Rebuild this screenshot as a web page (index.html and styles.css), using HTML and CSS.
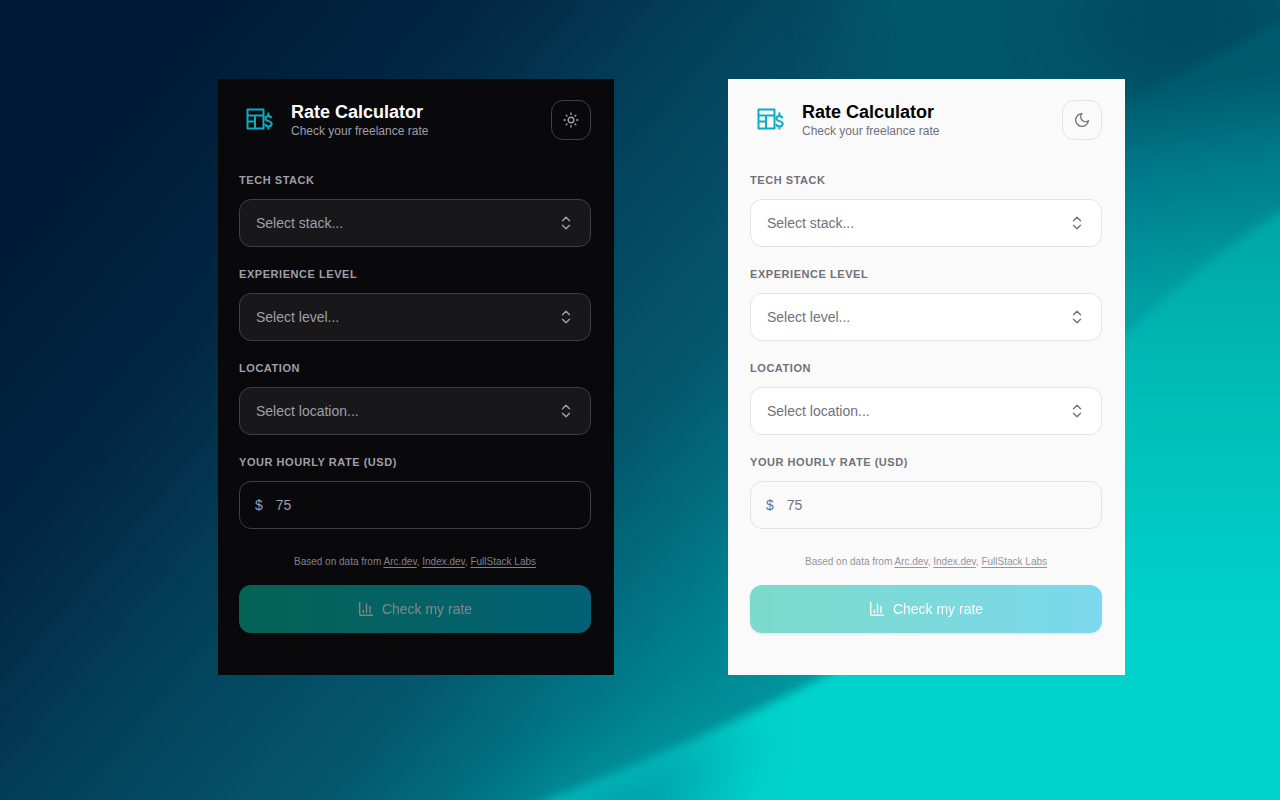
FILE: index.html
```html
<!DOCTYPE html>
<html lang="en">
<head>
  <meta charset="utf-8">
  <title>Rate Calculator</title>
  <link rel="stylesheet" href="styles.css">
</head>
<body>

<svg class="icon-defs" aria-hidden="true">
  <symbol id="logo" viewBox="0 0 40 40">
    <path d="M8.500 9.500H24.500V28.500H8.500zM8.500 15.500H24.500M8.500 21.500H16M16 15.500v13" />
    <path d="M32.500 18.200c-.4-1.500-1.600-2.300-3.100-2.300-1.700 0-3 .9-3 2.600 0 3.300 6.300 2 6.300 5.200 0 1.700-1.400 2.700-3.200 2.700-1.700 0-3-.9-3.300-2.400M29.400 12.500v3M29.400 26.500v3" />
  </symbol>
  <symbol id="sun" viewBox="0 0 16 16">
    <circle cx="8" cy="8" r="2.8" />
    <path d="M8 1v1.400M8 13.600v1.400M1 8h1.400M13.600 8h1.400M3.200 3.200l.8.8M12 12l.8.8M3.200 12.800l.8-.8M12 4l.8-.8" />
  </symbol>
  <symbol id="moon" viewBox="0 0 16 16">
    <path d="M8 1.600A4.800 4.800 0 0 0 14.400 8.700 6.400 6.400 0 1 1 8 1.600z" />
  </symbol>
  <symbol id="chart" viewBox="0 0 16 16">
    <path d="M1.700 1.500v11.500q0 1.300 1.300 1.300h11.500M5.300 9.500v2M8.500 3v8.500M12 5.500v6" />
  </symbol>
</svg>

<div class="page">
  <svg class="backdrop" viewBox="0 0 1280 800" preserveAspectRatio="none" aria-hidden="true">
    <defs>
      <linearGradient id="base" gradientUnits="userSpaceOnUse" x1="0" y1="0" x2="813" y2="691">
        <stop offset=".15" stop-color="#001a36" />
        <stop offset=".34" stop-color="#022642" />
        <stop offset=".5" stop-color="#033e58" />
        <stop offset=".72" stop-color="#04586e" />
        <stop offset=".88" stop-color="#007f8e" />
        <stop offset="1" stop-color="#0099a0" />
      </linearGradient>
      <linearGradient id="side" gradientUnits="userSpaceOnUse" x1="1130" y1="95" x2="1160" y2="300">
        <stop offset="0" stop-color="#045a6e" />
        <stop offset=".35" stop-color="#007788" />
        <stop offset="1" stop-color="#00a0a3" />
      </linearGradient>
      <linearGradient id="bright" gradientUnits="userSpaceOnUse" x1="1200" y1="220" x2="1200" y2="640">
        <stop offset="0" stop-color="#00a6a8" />
        <stop offset=".5" stop-color="#00c0ba" />
        <stop offset="1" stop-color="#00d3cc" />
      </linearGradient>
      <filter id="soft" x="-20%" y="-20%" width="140%" height="140%"><feGaussianBlur stdDeviation="5" /></filter>
      <filter id="softer" x="-100%" y="-100%" width="300%" height="300%"><feGaussianBlur stdDeviation="35" /></filter>
    </defs>
    <rect width="1280" height="800" fill="url(#base)" />
    <path d="M840-100H1400V170H880z" fill="#04566a" filter="url(#softer)" />
    <ellipse cx="1180" cy="20" rx="110" ry="60" fill="#04465e" opacity=".8" filter="url(#softer)" />
    <path d="M1300 10Q1220 60 1100 112V900H1300z" fill="url(#side)" filter="url(#soft)" />
    <path d="M1300 200Q1200 260 1110 350V560L840 668Q700 742 540 803V860H1340V200z" fill="url(#bright)" filter="url(#soft)" />
    <path d="M480 880L540 800 740 710 720 770 640 880z" fill="#0096a0" opacity=".9" filter="url(#softer)" />
  </svg>

  <main class="panels">
    <form class="panel dark">
      <header class="header">
        <svg class="logo"><use href="#logo" /></svg>
        <div class="heading">
          <h1 class="title">Rate Calculator</h1>
          <p class="subtitle">Check your freelance rate</p>
        </div>
        <button class="theme-button" type="button" aria-label="Light theme"><svg class="icon"><use href="#sun" /></svg></button>
      </header>

      <div class="fields">
        <div class="field">
          <label class="label" for="stack-dark">TECH STACK</label>
          <select class="control select" id="stack-dark"><option>Select stack...</option></select>
        </div>
        <div class="field">
          <label class="label" for="level-dark">EXPERIENCE LEVEL</label>
          <select class="control select" id="level-dark"><option>Select level...</option></select>
        </div>
        <div class="field">
          <label class="label" for="location-dark">LOCATION</label>
          <select class="control select" id="location-dark"><option>Select location...</option></select>
        </div>
        <div class="field">
          <label class="label" for="rate-dark">YOUR HOURLY RATE (USD)</label>
          <div class="control money">
            <span class="currency">$</span>
            <input class="amount" type="text" id="rate-dark" placeholder="75">
          </div>
        </div>
      </div>

      <p class="sources">Based on data from <a href="#">Arc.dev</a>, <a href="#">Index.dev</a>, <a href="#">FullStack Labs</a></p>
      <button class="submit" type="submit" disabled><svg class="icon"><use href="#chart" /></svg>Check my rate</button>
    </form>

    <form class="panel light">
      <header class="header">
        <svg class="logo"><use href="#logo" /></svg>
        <div class="heading">
          <h1 class="title">Rate Calculator</h1>
          <p class="subtitle">Check your freelance rate</p>
        </div>
        <button class="theme-button" type="button" aria-label="Dark theme"><svg class="icon"><use href="#moon" /></svg></button>
      </header>

      <div class="fields">
        <div class="field">
          <label class="label" for="stack-light">TECH STACK</label>
          <select class="control select" id="stack-light"><option>Select stack...</option></select>
        </div>
        <div class="field">
          <label class="label" for="level-light">EXPERIENCE LEVEL</label>
          <select class="control select" id="level-light"><option>Select level...</option></select>
        </div>
        <div class="field">
          <label class="label" for="location-light">LOCATION</label>
          <select class="control select" id="location-light"><option>Select location...</option></select>
        </div>
        <div class="field">
          <label class="label" for="rate-light">YOUR HOURLY RATE (USD)</label>
          <div class="control money">
            <span class="currency">$</span>
            <input class="amount" type="text" id="rate-light" placeholder="75">
          </div>
        </div>
      </div>

      <p class="sources">Based on data from <a href="#">Arc.dev</a>, <a href="#">Index.dev</a>, <a href="#">FullStack Labs</a></p>
      <button class="submit" type="submit" disabled><svg class="icon"><use href="#chart" /></svg>Check my rate</button>
    </form>
  </main>
</div>

</body>
</html>
```
FILE: styles.css
```css
* {
  box-sizing: border-box;
}
body {
  margin: 0;
  font-family: "Liberation Sans", Arial, sans-serif;
}
.icon-defs {
  display: none;
}
.page {
  display: grid;
  min-height: 100vh;
  background-color: #04566c;
}
.backdrop {
  grid-area: 1 / 1;
  width: 100%;
  height: 100%;
  min-height: 100vh;
}
.panels {
  grid-area: 1 / 1;
  z-index: 1;
  display: grid;
  grid-template-columns: 396fr 397fr;
  gap: 114px;
  align-items: start;
  padding: 79px 155px 79px 218px;
}
.panel {
  display: flex;
  flex-direction: column;
  background-color: var(--bg);
  color: var(--text);
}
.dark {
  --bg: #09090b;
  --text: #ffffff;
  --muted: #9f9fa9;
  --faint: #80808a;
  --border: #3f3f46;
  --box: #18181b;
  --currency: #90a1b9;
  --arrows: url("data:image/svg+xml,%3Csvg xmlns='http://www.w3.org/2000/svg' viewBox='0 0 16 16' fill='none' stroke='%239f9fa9' stroke-width='1.4' stroke-linecap='round' stroke-linejoin='round'%3E%3Cpath d='M4.5 5.8L8 2.3l3.5 3.5M4.5 10.2L8 13.7l3.5-3.5'/%3E%3C/svg%3E");
  padding: 21px 23px 42px 21px;
}
.light {
  --bg: #fafafa;
  --text: #000000;
  --muted: #71717b;
  --faint: #94949e;
  --border: #e4e4e7;
  --box: #ffffff;
  --currency: #62748e;
  --arrows: url("data:image/svg+xml,%3Csvg xmlns='http://www.w3.org/2000/svg' viewBox='0 0 16 16' fill='none' stroke='%2371717b' stroke-width='1.4' stroke-linecap='round' stroke-linejoin='round'%3E%3Cpath d='M4.5 5.8L8 2.3l3.5 3.5M4.5 10.2L8 13.7l3.5-3.5'/%3E%3C/svg%3E");
  padding: 21px 23px 42px 22px;
}
.header {
  display: flex;
  align-items: center;
  height: 40px;
}
.logo {
  width: 40px;
  height: 40px;
  fill: none;
  stroke: #06b0c2;
  stroke-width: 2;
  stroke-linejoin: round;
}
.heading {
  flex: 1;
  margin-left: 12px;
}
.title {
  margin: 0;
  font-size: 18px;
  line-height: 22px;
}
.subtitle {
  margin: 0;
  font-size: 12px;
  line-height: 16px;
  color: var(--muted);
}
.icon {
  width: 16px;
  height: 16px;
  fill: none;
  stroke: currentColor;
  stroke-width: 1.4;
  stroke-linecap: round;
  stroke-linejoin: round;
}
.theme-button {
  display: flex;
  align-items: center;
  justify-content: center;
  width: 40px;
  height: 40px;
  padding: 0;
  border: 1px solid var(--border);
  border-radius: 12px;
  background: none;
  color: var(--muted);
}
.fields {
  display: flex;
  flex-direction: column;
  gap: 19px;
  margin-top: 32px;
}
.field {
  display: flex;
  flex-direction: column;
  gap: 11px;
}
.label {
  font-size: 11px;
  font-weight: bold;
  line-height: 16px;
  letter-spacing: 0.05em;
  color: var(--muted);
}
.control {
  width: 100%;
  height: 48px;
  border: 1px solid var(--border);
  border-radius: 12px;
  font-family: inherit;
  font-size: 14px;
  color: var(--muted);
}
.select {
  appearance: none;
  padding: 0 16px;
  background: var(--box) var(--arrows) no-repeat right 16px center / 16px 16px;
}
.money {
  display: flex;
  align-items: center;
  gap: 13px;
  padding: 0 15px;
}
.currency {
  color: var(--currency);
}
.amount {
  flex: 1;
  min-width: 0;
  padding: 0;
  border: none;
  background: none;
  font: inherit;
  color: var(--text);
}
.amount::placeholder {
  color: var(--muted);
}
.sources {
  margin: 25px 0 15px;
  font-size: 10px;
  line-height: 16px;
  text-align: center;
  color: var(--faint);
}
.sources a {
  color: inherit;
  text-underline-offset: 2px;
}
.submit {
  display: flex;
  align-items: center;
  justify-content: center;
  gap: 8px;
  height: 48px;
  border: none;
  border-radius: 12px;
  background: linear-gradient(90deg, #00bc9e, #00b8e0);
  box-shadow: 0 1px 3px rgba(0, 0, 0, 0.2);
  font-family: inherit;
  font-size: 14px;
  color: white;
  opacity: 0.5;
}
```
